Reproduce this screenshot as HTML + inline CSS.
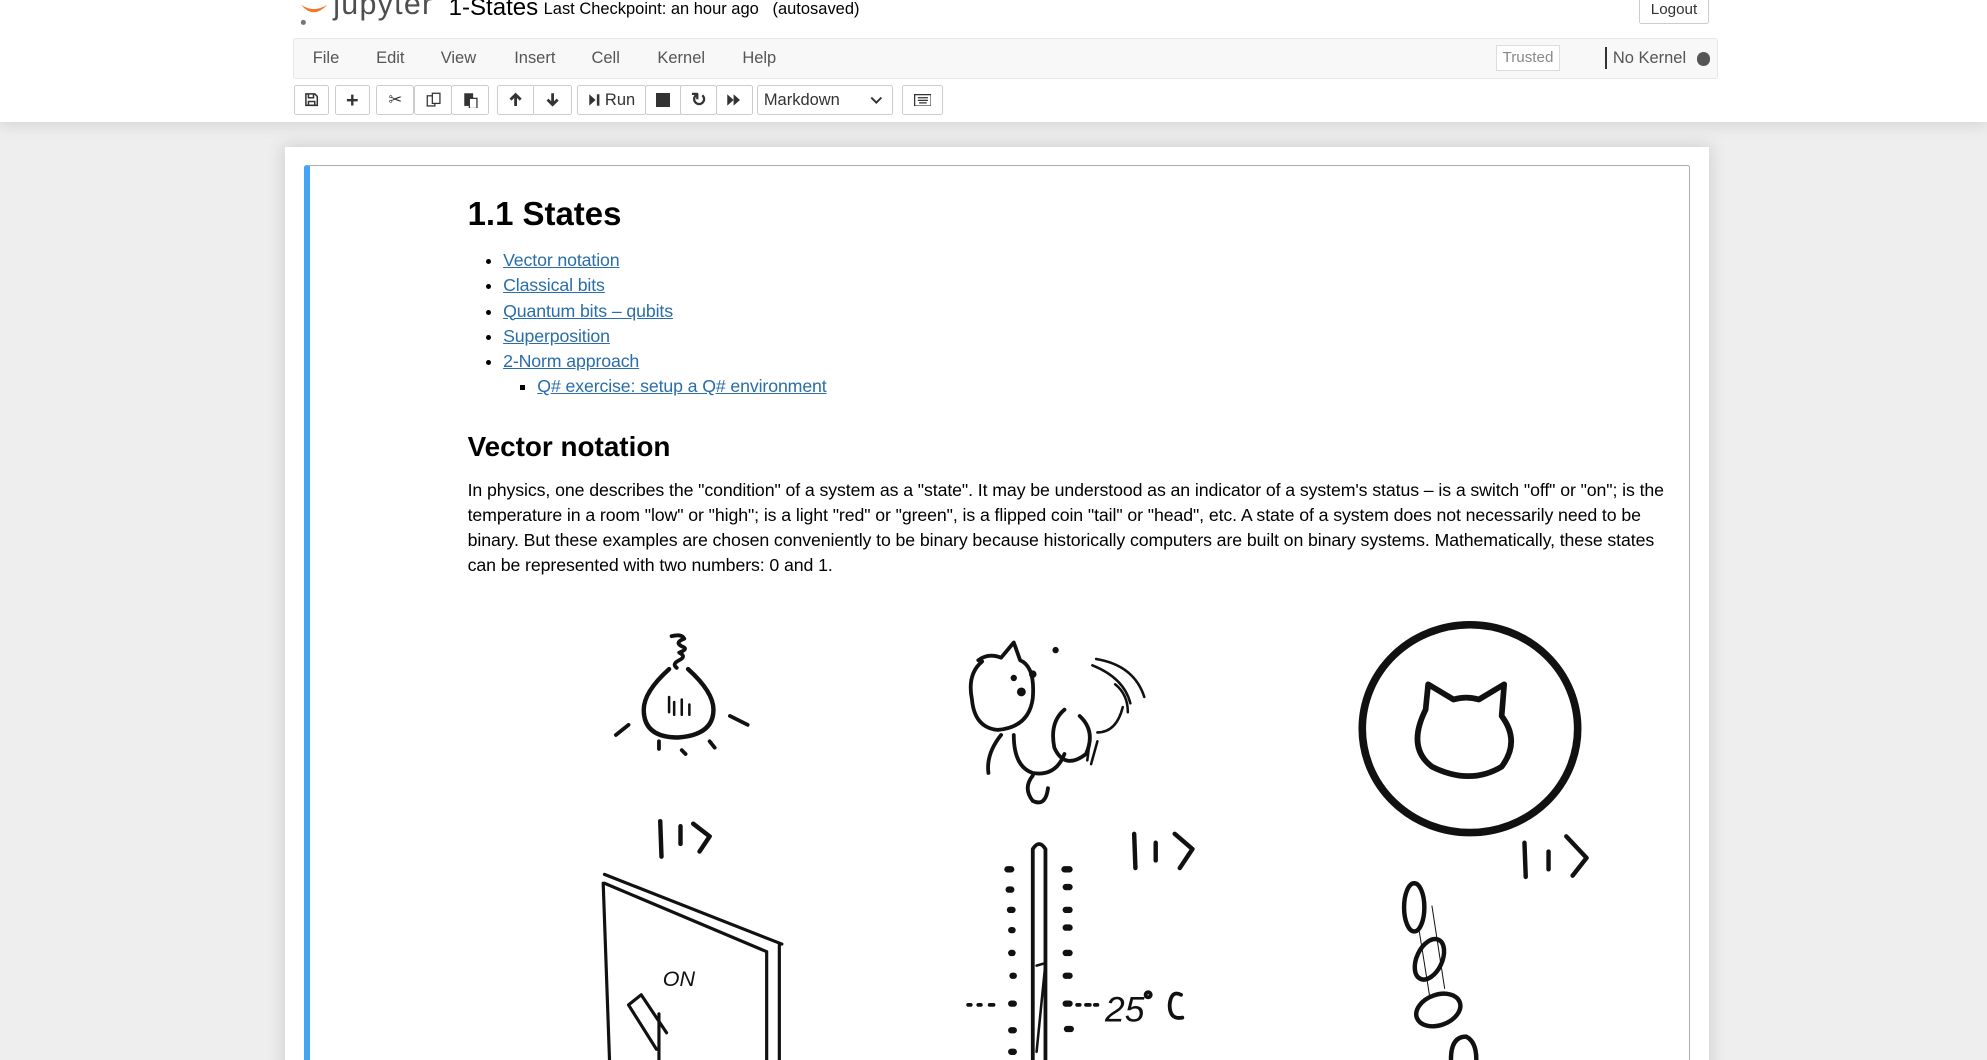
<!DOCTYPE html>
<html><head><meta charset="utf-8">
<style>
html,body{margin:0;padding:0;overflow:hidden;background:#eee}
body{width:1987px;height:1060px}
#z{zoom:1.26722;width:1568px;height:837px;position:relative;font-family:"Liberation Sans",Helvetica,Arial,sans-serif;color:#000;overflow:hidden}
.abs{position:absolute}
#hdr{left:0;top:0;width:1568px;height:96px;background:#fff;box-shadow:0 0 12px 1px rgba(87,87,87,.2)}
#menubar{left:231px;top:30px;width:1123px;height:31px;background:#f8f8f8;border:1px solid #e7e7e7;border-radius:2px}
.mi{position:absolute;top:8px;font-size:13px;color:#555}
.btn{position:absolute;top:67px;height:24px;border:1px solid #ccc;background:#fff;box-sizing:border-box;border-radius:2px;font-size:13px;color:#333;display:flex;align-items:center;justify-content:center}
#paper{left:225px;top:116px;width:1124px;height:740px;background:#fff;box-shadow:0 0 12px 1px rgba(87,87,87,.2)}
#cell{left:240px;top:130px;width:1088px;height:720px;border:1px solid #ababab;border-left:5px solid #42a5f5;border-radius:2px}
a{color:#296eaa;text-decoration:underline}
.txt{font-size:14px;line-height:19.8px}
</style></head><body><div id="z">
<div id="hdr" class="abs"></div>
<svg class="abs" style="left:234px;top:-6px" width="30" height="28" viewBox="0 0 30 28"><path d="M3 10 Q13 22 24 10 Q13 17 3 10Z" fill="#f37726"/><circle cx="5" cy="24" r="2" fill="#767677"/></svg>
<div class="abs" style="left:263px;top:-10px;font-size:24px;color:#4e4e4e;letter-spacing:1px">jupyter</div>
<div class="abs" style="left:354px;top:-5px;font-size:19px">1-States</div>
<div class="abs" style="left:429px;top:0px;font-size:13px">Last Checkpoint: an hour ago &nbsp; (autosaved)</div>
<div class="abs" style="left:1293px;top:-6px;width:56px;height:25px;border:1px solid #ccc;box-sizing:border-box;border-radius:2px;font-size:12px;color:#333;text-align:center;line-height:22px;padding-top:2px">Logout</div>
<div id="menubar" class="abs">
<span class="mi" style="left:15px">File</span><span class="mi" style="left:65px">Edit</span><span class="mi" style="left:116px">View</span><span class="mi" style="left:174px">Insert</span><span class="mi" style="left:235px">Cell</span><span class="mi" style="left:287px">Kernel</span><span class="mi" style="left:354px">Help</span>
<div class="abs" style="left:949px;top:5px;width:50px;height:20px;border:1px solid #ddd;background:#fff;box-sizing:border-box;font-size:12px;color:#888;text-align:center;line-height:19px">Trusted</div>
<div class="abs" style="left:1035px;top:6px;width:1px;height:18px;background:#333"></div>
<span class="mi" style="left:1041px">No Kernel</span>
<div class="abs" style="left:1107px;top:10px;width:11px;height:11px;border-radius:50%;background:#555"></div>
</div>
<div class="btn" style="left:232px;width:28px"><svg width="12" height="12" viewBox="0 0 12 12"><path d="M1.5 1.5h7l2 2v7h-9z M3.5 1.5v3h4v-3 M3.5 10.5v-3h5v3" fill="none" stroke="#333" stroke-width="1.2"/></svg></div>
<div class="btn" style="left:264px;width:28px;font-weight:bold;font-size:17px">+</div>
<div class="btn" style="left:297px;width:30px;font-size:13px">✂</div>
<div class="btn" style="left:327px;width:30px"><svg width="12" height="13"><rect x="1" y="3" width="6" height="8" fill="none" stroke="#333"/><rect x="5" y="1" width="6" height="8" fill="#fff" stroke="#333"/></svg></div>
<div class="btn" style="left:356px;width:30px"><svg width="12" height="13"><rect x="1" y="1" width="7" height="10" fill="#333"/><rect x="5" y="5" width="6" height="8" fill="#fff" stroke="#333"/></svg></div>
<div class="btn" style="left:392px;width:30px"><svg width="12" height="12"><path d="M6 11V2M2 6l4-4 4 4" stroke="#333" stroke-width="2.2" fill="none"/></svg></div>
<div class="btn" style="left:421px;width:30px"><svg width="12" height="12"><path d="M6 1v9M2 6l4 4 4-4" stroke="#333" stroke-width="2.2" fill="none"/></svg></div>
<div class="btn" style="left:455px;width:55px"><svg width="10" height="11"><path d="M1 1l5 4.5L1 10z" fill="#333"/><rect x="7" y="1" width="2" height="9" fill="#333"/></svg>&nbsp;Run</div>
<div class="btn" style="left:509px;width:29px"><div style="width:11px;height:11px;background:#333"></div></div>
<div class="btn" style="left:537px;width:29px;font-size:15px;font-weight:bold">↻</div>
<div class="btn" style="left:565px;width:29px"><svg width="13" height="11"><path d="M1 1l5 4.5L1 10zM6 1l5 4.5L6 10z" fill="#333"/></svg></div>
<div class="btn" style="left:597px;width:108px;justify-content:flex-start;padding-left:5px;font-size:13px">Markdown<svg style="position:absolute;right:8px;top:7px" width="10" height="8"><path d="M1 2l4 4 4-4" stroke="#333" stroke-width="1.5" fill="none"/></svg></div>
<div class="btn" style="left:712px;width:32px"><svg width="14" height="10"><rect x="0.5" y="0.5" width="13" height="9" fill="none" stroke="#333"/><path d="M3 3h8M3 5h8M4 7h6" stroke="#333"/></svg></div>

<div id="paper" class="abs"></div>
<div id="cell" class="abs"></div>
<div class="abs" style="left:369px;top:154px;font-size:26px;font-weight:bold">1.1 States</div>
<ul class="abs txt" style="left:356px;top:196px;margin:0;padding-left:41px;letter-spacing:-0.1px">
<li><a>Vector notation</a></li><li><a>Classical bits</a></li><li><a>Quantum bits – qubits</a></li><li><a>Superposition</a></li><li><a>2-Norm approach</a>
<ul style="padding-left:27px;list-style:square"><li><a>Q# exercise: setup a Q# environment</a></li></ul></li></ul>
<div class="abs" style="left:369px;top:340px;font-size:22px;font-weight:bold">Vector notation</div>
<div class="abs txt" style="left:369px;top:377px;width:948px;letter-spacing:-0.08px">In physics, one describes the "condition" of a system as a "state". It may be understood as an indicator of a system's status – is a switch "off" or "on"; is the temperature in a room "low" or "high"; is a light "red" or "green", is a flipped coin "tail" or "head", etc. A state of a system does not necessarily need to be binary. But these examples are chosen conveniently to be binary because historically computers are built on binary systems. Mathematically, these states can be represented with two numbers: 0 and 1.</div>

<svg class="abs" style="left:0;top:0" width="1568" height="837" fill="none" stroke="#111" stroke-linecap="round" stroke-linejoin="round">
<path d="M530 502q8-2 10 2q-8 3-2 6q6 2-2 5q6 3 0 6q-6 3-2 6" stroke-width="3"/>
<path d="M528 528q-20 18-20 32q0 22 27 22q28-2 28-22q0-14-20-32" stroke-width="3.5"/>
<path d="M528 550l0 12m4-8v10m6-12v12m6-8v8" stroke-width="2"/>
<path d="M486 580l10-8M520 585l0 6M538 592l3 3M560 585l4 5M576 565l14 7" stroke-width="3"/>
<path d="M521 648l1 28M537 652v14M547 650l13 10-8 12" stroke-width="3.5"/>
<path d="M895 658l1 27M912 665v14M927 658l14 12-10 15" stroke-width="3.5"/>
<path d="M1203 665l1 27M1222 672v14M1236 660l16 17-11 14" stroke-width="3.5"/>
<path d="M477 690l140 55M477 697l128 54M476 697l5 140M605 751l0 86M615 745l0 92" stroke-width="2.5"/>
<path d="M506 785l-10 8 22 35M506 785l20 30M520 800v37" stroke-width="2.5"/>
<text x="523" y="778" font-family="Liberation Sans" font-size="17" fill="#111" stroke="none" font-style="italic">ON</text>
<path d="M775 522q-12 10-8 30q2 22 20 24q25-2 28-25q2-25-10-30l-5-14-10 12q-10-4-18 2z" stroke-width="3"/>
<path d="M790 580q-12 15-10 30M800 580q0 25 15 30q18 3 25-15M815 612q-8 10 0 20q10 5 12-10M840 560q-12 10-8 30q8 18 25 5q8-18-5-30" stroke-width="3"/>
<path d="M862 525q25 10 30 30M865 520q30 5 38 30M880 540q10 8 10 22M860 585l-2 15M866 585l-5 18M866 578q15 0 20-20" stroke-width="2"/>
<circle cx="800" cy="535" r="2" fill="#111"/><circle cx="815" cy="532" r="2.5" fill="#111"/><circle cx="806" cy="546" r="3" fill="#111"/><circle cx="833" cy="513" r="2" fill="#111"/>
<path d="M815 836V670q5-8 10 0v166" stroke-width="3"/>
<path d="M818 762l7-2l-7 70" stroke-width="2"/>
<g stroke-width="5"><path d="M795 686h3M796 702h2M797 718h2M798 734h1M798 752h1M799 770h1M798 792h2M798 813h2M798 830h2M840 686h4M841 700h3M841 718h3M841 732h3M841 752h3M841 770h3M841 792h3M842 812h3"/></g>
<path d="M764 793h2M772 793h2M781 793h3M850 793h2M857 793h3M864 793h2" stroke-width="3"/>
<text x="872" y="806" font-family="Liberation Sans" font-size="28" fill="#111" stroke="none" font-style="italic">25</text>
<path d="M906 783a2 2 0 1 0 0.1 0M932 785q-8-4-9 8q0 12 10 10" stroke-width="3"/>
<ellipse cx="1160" cy="575" rx="85" ry="82" stroke-width="6"/>
<path d="M1125 560q-15 30 5 45q30 15 55 0q15-20 0-40l2-25-20 12q-10-3-20 0l-20-12z" stroke-width="4.5"/>
<ellipse cx="1116" cy="716" rx="8" ry="19" stroke-width="3.5"/>
<ellipse cx="1128" cy="757" rx="10" ry="17" transform="rotate(25 1128 757)" stroke-width="3.5"/>
<ellipse cx="1135" cy="797" rx="18" ry="12" transform="rotate(-20 1135 797)" stroke-width="3.5"/>
<path d="M1145 836q0-18 12-18q8 4 8 18" stroke-width="3.5"/>
<path d="M1120 735l8 50M1130 715l10 65" stroke-width="0.8"/>
</svg>
</div></body></html>
